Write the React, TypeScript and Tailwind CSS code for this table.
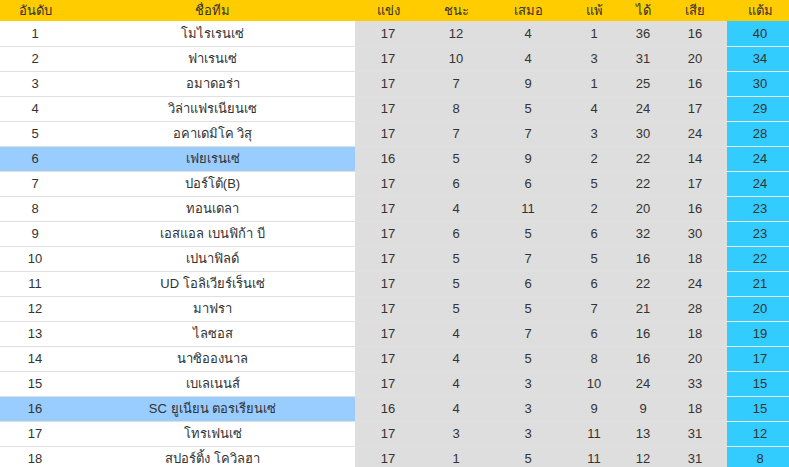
import React from "react";

type Row = {
  pos: number;
  team: string;
  p: number;
  w: number;
  d: number;
  l: number;
  gf: number;
  ga: number;
  pts: number;
  mark?: boolean;
};

const rows: Row[] = [
  { pos: 1, team: "โมไรเรนเซ่", p: 17, w: 12, d: 4, l: 1, gf: 36, ga: 16, pts: 40 },
  { pos: 2, team: "ฟาเรนเซ่", p: 17, w: 10, d: 4, l: 3, gf: 31, ga: 20, pts: 34 },
  { pos: 3, team: "อมาดอร่า", p: 17, w: 7, d: 9, l: 1, gf: 25, ga: 16, pts: 30 },
  { pos: 4, team: "วิล่าแฟรเนียนเซ", p: 17, w: 8, d: 5, l: 4, gf: 24, ga: 17, pts: 29 },
  { pos: 5, team: "อคาเดมิโค วิสุ", p: 17, w: 7, d: 7, l: 3, gf: 30, ga: 24, pts: 28 },
  { pos: 6, team: "เฟยเรนเซ่", p: 16, w: 5, d: 9, l: 2, gf: 22, ga: 14, pts: 24, mark: true },
  { pos: 7, team: "ปอร์โต้(B)", p: 17, w: 6, d: 6, l: 5, gf: 22, ga: 17, pts: 24 },
  { pos: 8, team: "ทอนเดลา", p: 17, w: 4, d: 11, l: 2, gf: 20, ga: 16, pts: 23 },
  { pos: 9, team: "เอสแอล เบนฟิก้า บี", p: 17, w: 6, d: 5, l: 6, gf: 32, ga: 30, pts: 23 },
  { pos: 10, team: "เปนาฟิลด์", p: 17, w: 5, d: 7, l: 5, gf: 16, ga: 18, pts: 22 },
  { pos: 11, team: "UD โอลิเวียร์เร็นเซ่", p: 17, w: 5, d: 6, l: 6, gf: 22, ga: 24, pts: 21 },
  { pos: 12, team: "มาฟรา", p: 17, w: 5, d: 5, l: 7, gf: 21, ga: 28, pts: 20 },
  { pos: 13, team: "ไลซอส", p: 17, w: 4, d: 7, l: 6, gf: 16, ga: 18, pts: 19 },
  { pos: 14, team: "นาซิอองนาล", p: 17, w: 4, d: 5, l: 8, gf: 16, ga: 20, pts: 17 },
  { pos: 15, team: "เบเลเนนส์", p: 17, w: 4, d: 3, l: 10, gf: 24, ga: 33, pts: 15 },
  { pos: 16, team: "SC ยูเนียน ตอรเรียนเซ่", p: 16, w: 4, d: 3, l: 9, gf: 9, ga: 18, pts: 15, mark: true },
  { pos: 17, team: "โทรเฟนเซ่", p: 17, w: 3, d: 3, l: 11, gf: 13, ga: 31, pts: 12 },
  { pos: 18, team: "สปอร์ติ้ง โควิลฮา", p: 17, w: 1, d: 5, l: 11, gf: 12, ga: 31, pts: 8 },
];

const heads = ["อันดับ", "ชื่อทีม", "แข่ง", "ชนะ", "เสมอ", "แพ้", "ได้", "เสีย", "แต้ม"];

export default function App() {
  return (
    <div
      className="w-[789px] h-[467px] overflow-hidden bg-white text-[#333333] text-[13px]"
      style={{ fontFamily: "'Liberation Sans', 'Noto Sans', Tahoma, sans-serif" }}
    >
      <table className="w-[789px] table-fixed border-collapse">
        <colgroup>
          <col className="w-[70px]" />
          <col className="w-[285px]" />
          <col className="w-[66px]" />
          <col className="w-[70px]" />
          <col className="w-[74px]" />
          <col className="w-[58px]" />
          <col className="w-[40px]" />
          <col className="w-[64px]" />
          <col className="w-[62px]" />
        </colgroup>
        <thead>
          <tr className="h-[21px] bg-[#ffcc00]">
            {heads.map((h, i) => (
              <th
                key={h}
                className={`p-0 font-normal text-center leading-none ${i === 8 ? "pl-1" : ""}`}
              >
                {h}
              </th>
            ))}
          </tr>
        </thead>
        <tbody>
          {rows.map((r) => {
            const left = r.mark ? "bg-[#99ccff]" : "bg-white";
            const cell = "p-0 text-center border-b border-[#e0e0e0] bg-[#dedede]";
            return (
              <tr key={r.pos} className="h-[25px]">
                <td className={`p-0 text-center border-b border-[#e0e0e0] ${left}`}>{r.pos}</td>
                <td className={`p-0 text-center border-b border-[#e0e0e0] ${left}`}>{r.team}</td>
                <td className={cell}>{r.p}</td>
                <td className={cell}>{r.w}</td>
                <td className={cell}>{r.d}</td>
                <td className={cell}>{r.l}</td>
                <td className={cell}>{r.gf}</td>
                <td className={cell}>{r.ga}</td>
                <td className="p-0 pl-1 text-center border-b border-[#e8e8e8] bg-[#33ccff]">
                  {r.pts}
                </td>
              </tr>
            );
          })}
        </tbody>
      </table>
    </div>
  );
}
